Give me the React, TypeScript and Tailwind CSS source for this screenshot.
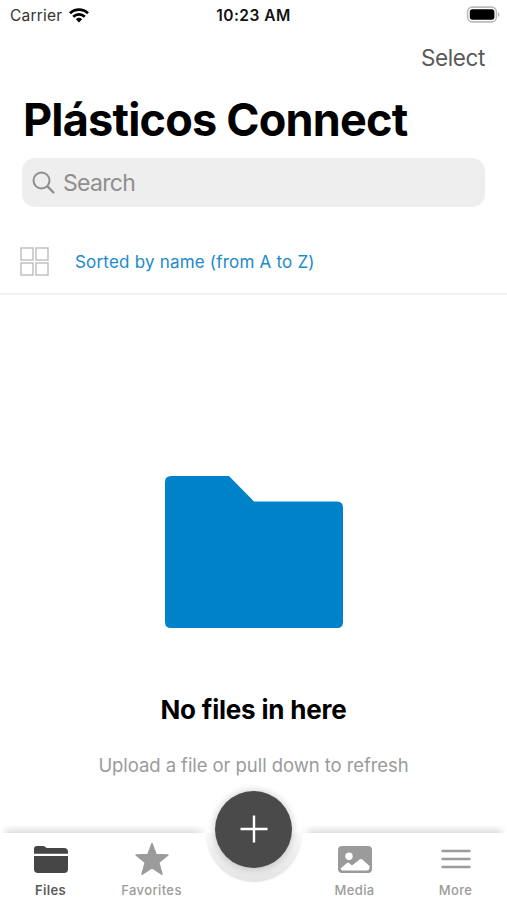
import type { ReactNode } from "react";

interface TabProps {
  label: string;
  active?: boolean;
  children: ReactNode;
}

function Tab({ label, active, children }: TabProps) {
  return (
    <button
      className={
        active
          ? "flex w-[101px] flex-col items-center text-[#454545]"
          : "flex w-[101px] flex-col items-center text-[#9b9b9b]"
      }
    >
      <span className="mt-2 flex h-9 items-center">{children}</span>
      <span
        className={
          active
            ? "mt-[5px] text-[13px] leading-4 font-semibold tracking-[0.3px] text-[#5a5a5a]"
            : "mt-[5px] text-[13px] leading-4 font-medium tracking-[0.4px]"
        }
      >
        {label}
      </span>
    </button>
  );
}

function StatusBar() {
  return (
    <div className="grid h-[30px] grid-cols-3 items-center pr-[7px] pl-[10px]">
      <div className="flex items-center gap-[7px] pt-0.5 text-[15.5px] tracking-[0.2px] text-[#333]">
        Carrier
        <svg className="mb-0.5" width="20" height="15" viewBox="0 0 20 15" fill="none" stroke="#000" strokeWidth="2.7">
          <path d="M1 5.2A13 13 0 0 1 19 5.2" />
          <path d="M4.2 8.7A8.4 8.4 0 0 1 15.8 8.7" />
          <path d="M10 14.4 6.9 11.2A4.5 4.5 0 0 1 13.1 11.2Z" fill="#000" stroke="none" />
        </svg>
      </div>
      <span className="pt-0.5 pr-[3px] text-center text-[15.5px] font-semibold tracking-[0.5px] whitespace-nowrap text-[#111]">
        10:23 AM
      </span>
      <svg className="mb-0.5 justify-self-end" width="34" height="17" viewBox="0 0 34 17">
        <rect x="1.6" y="1.1" width="28.8" height="14.8" rx="4.6" fill="#fff" stroke="#bbb" strokeWidth="1.6" />
        <rect x="3.8" y="3.3" width="24.6" height="10.4" rx="2.6" fill="#000" />
        <path d="M32 6.2c2 .8 2 3.8 0 4.6z" fill="#bbb" />
      </svg>
    </div>
  );
}

function BottomBar() {
  return (
    <nav className="relative flex h-[67px] justify-between bg-white pr-px">
      {/* soft shadow above the bar, fading out at both ends and around the notch */}
      <div className="absolute -top-2 left-0 h-2 w-[208px] bg-linear-to-t from-black/12 to-transparent mask-[linear-gradient(to_right,transparent,#000_10px,#000_194px,transparent)]" />
      <div className="absolute -top-2 right-0 h-2 w-[207px] bg-linear-to-t from-black/12 to-transparent mask-[linear-gradient(to_right,transparent,#000_14px,#000_197px,transparent)]" />
      {/* notch cut out around the add button */}
      <div className="absolute top-0 left-[206px] h-[49px] w-[96px] rounded-b-full bg-linear-to-b from-[#fafafa] via-[#ededed] via-45% to-[#e5e5e5] shadow-[0_1px_2px_rgba(0,0,0,0.04)]" />

      <div className="flex">
        <Tab label="Files" active>
          <svg width="36" height="28" viewBox="0 0 36 28" fill="currentColor">
            <path d="M1 8.700V4Q1 1 4 1H10Q12 1 13.500 3H31Q35 3 35 7V8.700Z" />
            <path d="M1 11H35V24Q35 28 31 28H5Q1 28 1 24Z" />
          </svg>
        </Tab>
        <Tab label="Favorites">
          <svg width="36" height="34" viewBox="0 0 36 34" fill="currentColor" stroke="currentColor" strokeWidth="1.4" strokeLinejoin="round">
            <path d="M18 1.5 22.1 12.4 34 13 24.8 20.4 28 32.3 18 25.7 8 32.3 11.2 20.4 2 13 13.9 12.4Z" />
          </svg>
        </Tab>
      </div>

      <div className="flex">
        <Tab label="Media">
          <svg width="34" height="27" viewBox="0 0 34 27">
            <rect width="34" height="27" rx="4" fill="currentColor" />
            <circle cx="11" cy="10.3" r="3.7" fill="#fff" />
            <path d="M2.5 22.5 9 16.900Q10 16 11 16.900L14 19.500 22 13.300Q23 12.500 24 13.300L31.500 20V21.500Q31.500 24.500 28.500 24.500H4Z" fill="#fff" />
          </svg>
        </Tab>
        <Tab label="More">
          <svg width="30" height="20" viewBox="0 0 30 20" stroke="currentColor" strokeWidth="2.4" strokeLinecap="round">
            <path d="M1.5 2H28.5M1.5 10H28.5M1.5 18H28.5" />
          </svg>
        </Tab>
      </div>

      <button
        aria-label="Add"
        className="absolute -top-[42px] left-[215px] flex h-[77px] w-[77px] items-center justify-center rounded-full bg-[#4a4a4a] shadow-[0_0_6px_2px_rgba(0,0,0,0.14)]"
      >
        <svg className="mb-px" width="28" height="28" viewBox="0 0 28 28" stroke="#fff" strokeWidth="2.4">
          <path d="M14 0.5V27.5M0.5 14H27.5" />
        </svg>
      </button>
    </nav>
  );
}

export default function App() {
  return (
    <div className="flex h-[900px] w-[507px] flex-col overflow-hidden bg-white font-['Inter',sans-serif]">
      <StatusBar />

      <header className="px-[22px]">
        <div className="flex h-14 items-center justify-end text-[22.5px] tracking-[-0.4px] text-[#595959]">
          Select
        </div>
        <h1 className="mt-2 ml-px h-[52px] text-[45px] leading-[52px] font-bold tracking-[-0.8px] whitespace-nowrap text-black">
          Plásticos Connect
        </h1>
        <div className="mt-3 flex h-[49px] items-center gap-2 rounded-[13px] bg-[#eee] pt-0.5 pl-[10px] text-[23px] tracking-[-0.7px] text-[#8e8e8e]">
          <svg className="mb-0.5" width="23" height="23" viewBox="0 0 23 23" fill="none" stroke="currentColor" strokeWidth="2">
            <circle cx="9.5" cy="9.5" r="8" />
            <path d="M15.2 15.2 22 22" strokeWidth="2.4" />
          </svg>
          Search
        </div>
      </header>

      <div className="mt-7 flex h-[60px] items-center border-b-2 border-[#f1f1f1] pb-[9px] pl-5">
        <svg className="mt-1" width="29" height="29" viewBox="0 0 29 29" fill="none" stroke="#bcbcbc" strokeWidth="1.4">
          <rect x="1" y="1" width="12" height="12" />
          <rect x="16" y="1" width="12" height="12" />
          <rect x="1" y="16" width="12" height="12" />
          <rect x="16" y="16" width="12" height="12" />
        </svg>
        <span className="mt-1.5 ml-[26px] text-[17px] tracking-[0.2px] whitespace-nowrap text-[#1c8acb]">
          Sorted by name (from A to Z)
        </span>
      </div>

      <main className="flex flex-1 flex-col items-center">
        <svg className="mt-[181px]" width="178" height="152" viewBox="0 0 178 152" fill="#0082c9">
          <path d="M6 0H64L89 25.500H172Q178 25.500 178 31.500V146Q178 152 172 152H6Q0 152 0 146V6Q0 0 6 0Z" />
        </svg>
        <h2 className="mt-[66px] text-[26px] leading-8 font-bold tracking-[-0.2px] whitespace-nowrap text-black">
          No files in here
        </h2>
        <p className="mt-[27px] text-[18.5px] leading-6 tracking-[-0.07px] whitespace-nowrap text-[#9b9b9b]">
          Upload a file or pull down to refresh
        </p>
      </main>

      <BottomBar />
    </div>
  );
}
